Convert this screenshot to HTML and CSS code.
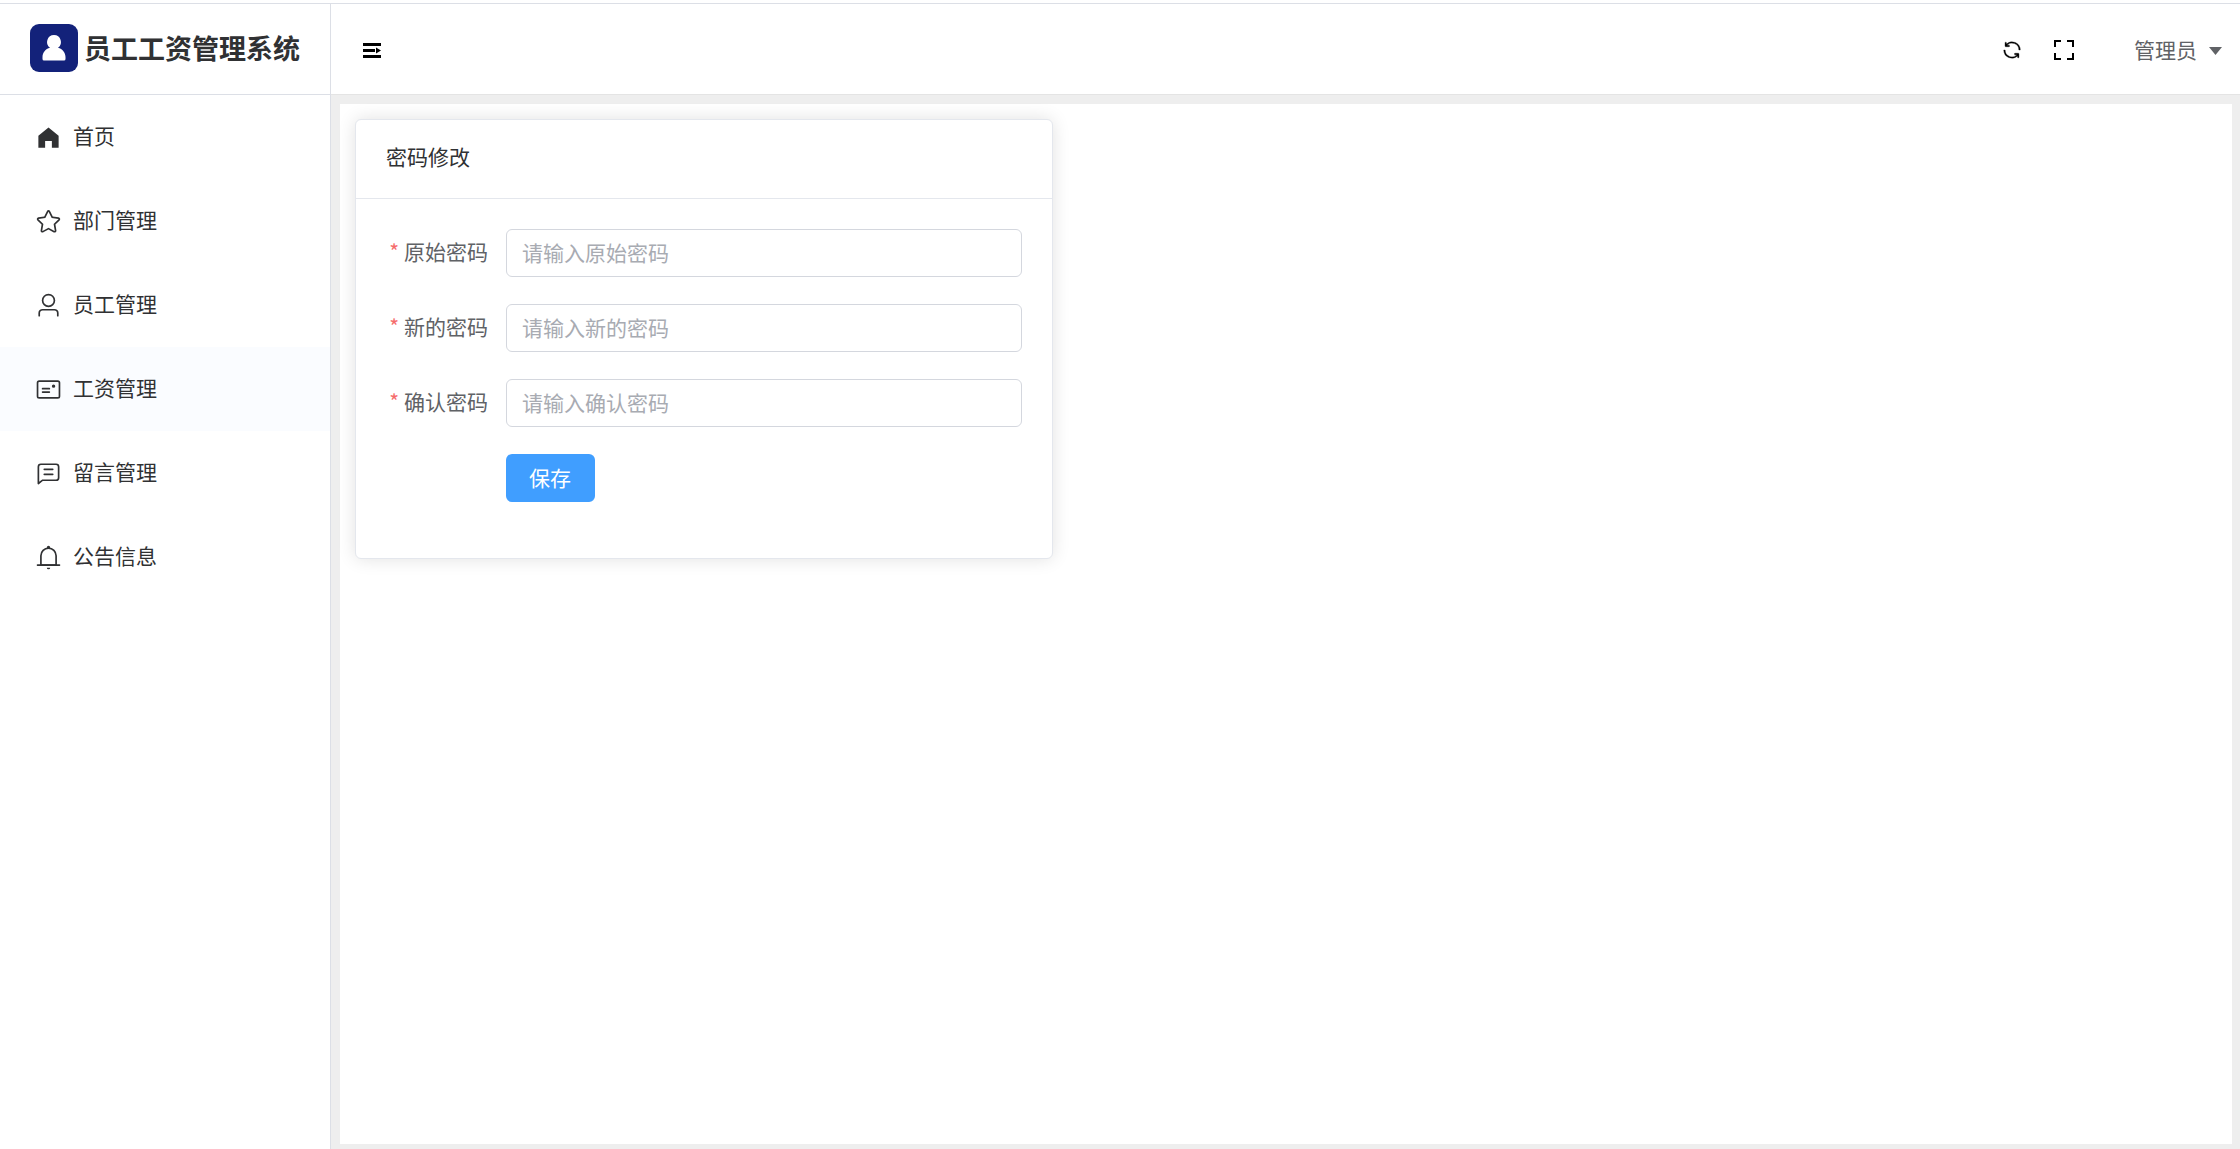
FILE: index.html
```
<!DOCTYPE html>
<html lang="zh-CN">
<head>
    <meta charset="UTF-8">
    <meta name="viewport" content="width=device-width, initial-scale=1.0">
    <title>员工工资管理系统</title>
    <link rel="stylesheet" href="styles.css">
</head>
<body>
    <div class="layout">
        <!-- Sidebar -->
        <aside class="sidebar">
            <div class="brand">
                <svg class="logo" viewBox="0 0 48 48" aria-hidden="true">
                    <rect width="48" height="48" rx="9" fill="#13227a"/>
                    <path d="M24 11a7 7 0 0 1 4 12.700c4.500 1 7.500 5 7.500 9.300v2a1.500 1.500 0 0 1-1.500 1.500H14a1.500 1.500 0 0 1-1.500-1.500v-2c0-4.300 3-8.300 7.500-9.300A7 7 0 0 1 24 11z" fill="#fff"/>
                </svg>
                <h1>员工工资管理系统</h1>
            </div>
            <nav class="menu">
                <a class="menu-item" href="#">
                    <svg class="menu-icon" viewBox="0 0 1024 1024"><path d="M512 128 128 447.936V896h255.936V640H640v256h255.936V447.936z"/></svg>
                    <span>首页</span>
                </a>
                <a class="menu-item" href="#">
                    <svg class="menu-icon" viewBox="0 0 1024 1024"><path d="m512 747.840 228.160 119.936a6.400 6.400 0 0 0 9.280-6.720l-43.520-254.080 184.512-179.904a6.400 6.400 0 0 0-3.520-10.880l-255.104-37.120L517.760 147.904a6.400 6.400 0 0 0-11.520 0L392.192 379.072l-255.104 37.120a6.400 6.400 0 0 0-3.520 10.880L318.080 606.976l-43.584 254.080a6.400 6.400 0 0 0 9.280 6.720zM313.600 924.480a70.400 70.400 0 0 1-102.144-74.240l37.888-220.928L88.960 472.960A70.400 70.400 0 0 1 128 352.896l221.760-32.256 99.200-200.960a70.400 70.400 0 0 1 126.208 0l99.200 200.960 221.824 32.256a70.400 70.400 0 0 1 39.040 120.064L774.720 629.376l37.888 220.928a70.400 70.400 0 0 1-102.144 74.240L512 820.096l-198.400 104.320z"/></svg>
                    <span>部门管理</span>
                </a>
                <a class="menu-item" href="#">
                    <svg class="menu-icon" viewBox="0 0 1024 1024"><path d="M512 512a192 192 0 1 0 0-384 192 192 0 0 0 0 384m0 64a256 256 0 1 1 0-512 256 256 0 0 1 0 512m320 320v-96a96 96 0 0 0-96-96H288a96 96 0 0 0-96 96v96a32 32 0 1 1-64 0v-96a160 160 0 0 1 160-160h448a160 160 0 0 1 160 160v96a32 32 0 1 1-64 0"/></svg>
                    <span>员工管理</span>
                </a>
                <a class="menu-item is-hover" href="#">
                    <svg class="menu-icon" viewBox="0 0 1024 1024"><path d="M160 224a32 32 0 0 0-32 32v512a32 32 0 0 0 32 32h704a32 32 0 0 0 32-32V256a32 32 0 0 0-32-32zm0-64h704a96 96 0 0 1 96 96v512a96 96 0 0 1-96 96H160a96 96 0 0 1-96-96V256a96 96 0 0 1 96-96"/><path d="M704 320a64 64 0 1 1 0 128 64 64 0 0 1 0-128M288 448h256q32 0 32 32t-32 32H288q-32 0-32-32t32-32m0 128h256q32 0 32 32t-32 32H288q-32 0-32-32t32-32"/></svg>
                    <span>工资管理</span>
                </a>
                <a class="menu-item" href="#">
                    <svg class="menu-icon" viewBox="0 0 1024 1024"><path d="M160 826.880 273.536 736H800a64 64 0 0 0 64-64V256a64 64 0 0 0-64-64H224a64 64 0 0 0-64 64zM296 800 147.968 918.400A32 32 0 0 1 96 893.440V256a128 128 0 0 1 128-128h576a128 128 0 0 1 128 128v416a128 128 0 0 1-128 128z"/><path d="M352 512h320q32 0 32 32t-32 32H352q-32 0-32-32t32-32m0-192h320q32 0 32 32t-32 32H352q-32 0-32-32t32-32"/></svg>
                    <span>留言管理</span>
                </a>
                <a class="menu-item" href="#">
                    <svg class="menu-icon" viewBox="0 0 1024 1024"><path d="M512 64a64 64 0 0 1 64 64v64H448v-64a64 64 0 0 1 64-64"/><path d="M256 768h512V448a256 256 0 1 0-512 0zm256-640a320 320 0 0 1 320 320v384H192V448a320 320 0 0 1 320-320"/><path d="M96 768h832q32 0 32 32t-32 32H96q-32 0-32-32t32-32m352 128h128a64 64 0 0 1-128 0"/></svg>
                    <span>公告信息</span>
                </a>
            </nav>
        </aside>

        <div class="content">
            <!-- Top bar -->
            <header class="topbar">
                <button class="icon-button" type="button" aria-label="折叠菜单">
                    <svg width="18" height="15" viewBox="0 0 18 15"><path d="M0 0h18v3H0zM0 6h12v3H0zM0 12h18v3H0zM13 4.500l5 3-5 3z"/></svg>
                </button>
                <div class="tools">
                    <button class="icon-button" type="button" aria-label="刷新">
                        <svg width="22" height="22" viewBox="0 0 1024 1024"><path d="M771.776 794.880A384 384 0 0 1 128 512h64a320 320 0 0 0 555.712 216.448H654.720a32 32 0 1 1 0-64h149.056a32 32 0 0 1 32 32v148.928a32 32 0 1 1-64 0v-50.560zM276.288 295.616h92.992a32 32 0 0 1 0 64H220.160a32 32 0 0 1-32-32V178.560a32 32 0 0 1 64 0v50.560A384 384 0 0 1 896.128 512h-64a320 320 0 0 0-555.776-216.384z" stroke="#000" stroke-width="16"/></svg>
                    </button>
                    <button class="icon-button" type="button" aria-label="全屏">
                        <svg width="20" height="20" viewBox="0 0 20 20"><path d="M1 7V1h6M13 1h6v6M19 13v6h-6M7 19H1v-6" fill="none" stroke="#000" stroke-width="2"/></svg>
                    </button>
                    <button class="user" type="button">
                        <span>管理员</span>
                        <svg width="13" height="8" viewBox="0 0 13 8"><path d="M0 0h13L6.500 8z"/></svg>
                    </button>
                </div>
            </header>

            <main class="main">
                <div class="page">
                    <!-- Password form -->
                    <section class="card">
                        <h2 class="card-header">密码修改</h2>
                        <form class="card-body">
                            <div class="form-item">
                                <label for="old-password">原始密码</label>
                                <input type="password" id="old-password" placeholder="请输入原始密码">
                            </div>
                            <div class="form-item">
                                <label for="new-password">新的密码</label>
                                <input type="password" id="new-password" placeholder="请输入新的密码">
                            </div>
                            <div class="form-item">
                                <label for="confirm-password">确认密码</label>
                                <input type="password" id="confirm-password" placeholder="请输入确认密码">
                            </div>
                            <div class="form-item form-actions">
                                <button class="save-button" type="button">保存</button>
                            </div>
                        </form>
                    </section>
                </div>
            </main>
        </div>
    </div>
</body>
</html>
```
FILE: styles.css
```
* {
    box-sizing: border-box;
}

body {
    margin: 0;
    font-family: "Noto Sans CJK SC", sans-serif;
    font-size: 21px;
    font-weight: 400;
    color: #303133;
    background-color: #fff;
}

button,
input {
    font-family: inherit;
    font-size: inherit;
    font-weight: inherit;
}

.layout {
    display: flex;
    min-height: 100vh;
    padding-top: 3px;
}

.sidebar {
    flex: 0 0 331px;
    border-top: 1px solid #dcdfe6;
    border-right: 1px solid #dcdfe6;
}

.brand {
    display: flex;
    align-items: center;
    gap: 6px;
    height: 91px;
    padding: 0 0 3px 30px;
    border-bottom: 1px solid #dcdfe6;
}

.logo {
    width: 48px;
    height: 48px;
}

.brand h1 {
    margin: 0;
    font-size: 27px;
    font-weight: bold;
    line-height: 40px;
}

.menu-item {
    display: flex;
    align-items: center;
    gap: 11px;
    height: 84px;
    padding: 0 35px;
    color: #303133;
    text-decoration: none;
}

.menu-item span {
    padding-bottom: 4px;
}

.menu-item:hover,
.menu-item.is-hover {
    background-color: #fafcff;
}

.menu-icon {
    width: 27px;
    height: 27px;
    fill: currentColor;
}

.content {
    flex: 1;
    display: flex;
    flex-direction: column;
    min-width: 0;
    border-top: 1px solid #dcdfe6;
}

.topbar {
    display: flex;
    align-items: center;
    justify-content: space-between;
    height: 91px;
    padding: 2px 18px 0 32px;
    border-bottom: 1px solid #e4e4e4;
}

.icon-button,
.user {
    display: flex;
    align-items: center;
    padding: 0;
    border: none;
    background: none;
    cursor: pointer;
}

.tools {
    display: flex;
    align-items: center;
    gap: 31px;
}

.user {
    gap: 12px;
    margin-left: 29px;
    padding-top: 2px;
    color: #606266;
    fill: #606266;
}

.user span {
    padding-bottom: 4px;
}

.main {
    flex: 1;
    display: flex;
    padding: 9px 8px 5px 9px;
    background-color: #eee;
}

.page {
    flex: 1;
    padding: 15px;
    background-color: #fff;
}

.card {
    width: 37.5%;
    border: 1px solid #e4e7ed;
    border-radius: 6px;
    background-color: #fff;
    box-shadow: 0 0 18px rgba(0, 0, 0, 0.12);
}

.card-header {
    margin: 0;
    padding: 21px 30px 27px;
    border-bottom: 1px solid #e4e7ed;
    font-size: 21px;
    font-weight: inherit;
    line-height: 30px;
}

.card-body {
    padding: 30px 30px 29px;
}

.form-item {
    display: flex;
    align-items: center;
    margin-bottom: 27px;
}

.form-item label {
    flex: 0 0 120px;
    padding: 0 18px 4px 0;
    color: #606266;
    text-align: right;
}

.form-item label::before {
    content: "*";
    margin-right: 5px;
    color: #f56c6c;
}

.form-item input {
    flex: 1;
    min-width: 0;
    height: 48px;
    padding: 0 15px 2px;
    border: 1px solid #d4d7de;
    border-radius: 6px;
    outline: none;
    color: #606266;
}

.form-item input::placeholder {
    color: #a8abb2;
}

.form-actions {
    padding-left: 120px;
}

.save-button {
    height: 48px;
    padding: 0 24px 2px 23px;
    border: none;
    border-radius: 6px;
    background-color: #409eff;
    color: #fff;
    cursor: pointer;
}
```
